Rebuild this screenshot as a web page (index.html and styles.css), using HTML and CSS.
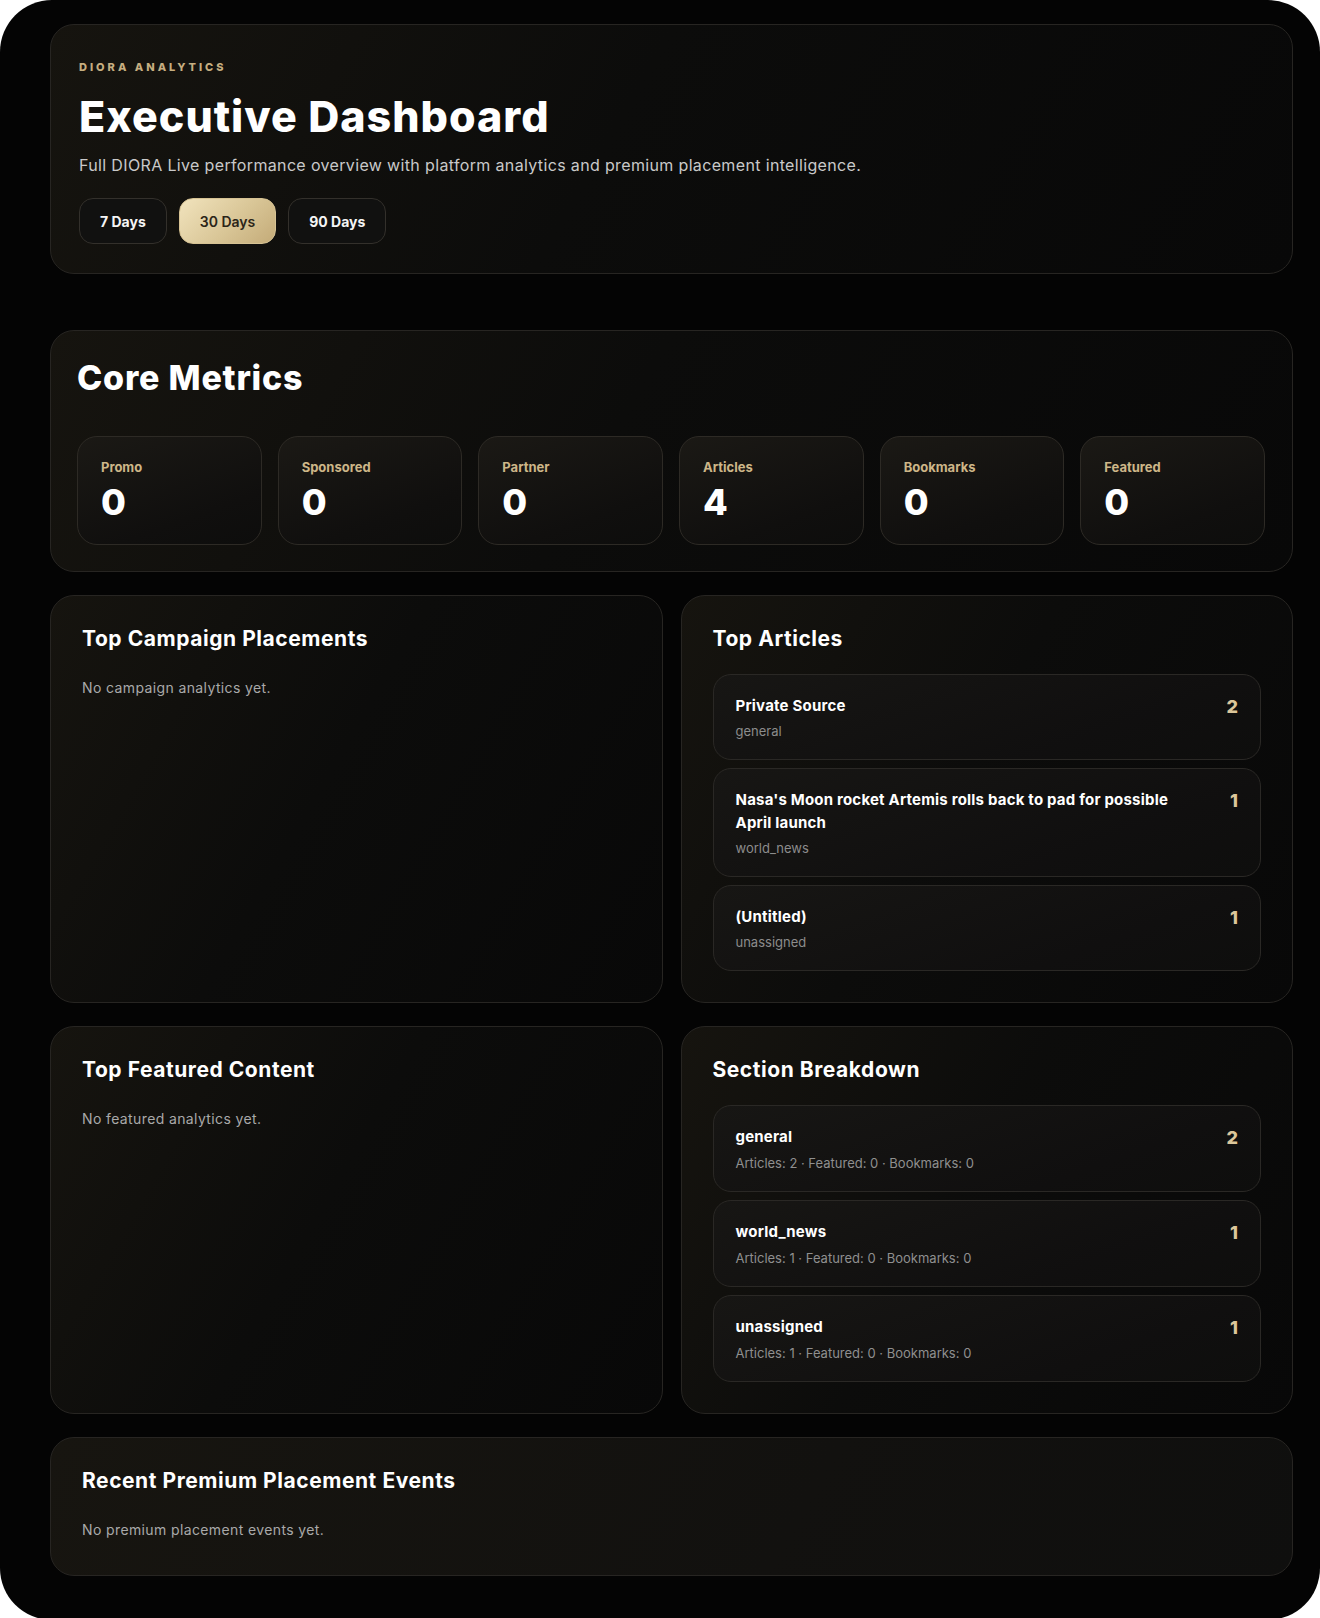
FILE: index.html
```html
<!DOCTYPE html>
<html lang="en">
<head>
    <meta charset="UTF-8">
    <meta name="viewport" content="width=device-width, initial-scale=1.0">
    <title>Executive Dashboard</title>
    <link rel="stylesheet" href="styles.css">
</head>
<body>
<div class="screen">
    <!-- header -->
    <div class="card hero">
        <p class="eyebrow">DIORA ANALYTICS</p>
        <h1>Executive Dashboard</h1>
        <p class="lead">Full DIORA Live performance overview with platform analytics and premium placement intelligence.</p>
        <div class="range-group">
            <button class="range">7 Days</button>
            <button class="range active">30 Days</button>
            <button class="range">90 Days</button>
        </div>
    </div>

    <!-- core metrics -->
    <div class="card core">
        <h2>Core Metrics</h2>
        <div class="metrics">
            <div class="metric"><span class="metric-label">Promo</span><span class="metric-value">0</span></div>
            <div class="metric"><span class="metric-label">Sponsored</span><span class="metric-value">0</span></div>
            <div class="metric"><span class="metric-label">Partner</span><span class="metric-value">0</span></div>
            <div class="metric"><span class="metric-label">Articles</span><span class="metric-value">4</span></div>
            <div class="metric"><span class="metric-label">Bookmarks</span><span class="metric-value">0</span></div>
            <div class="metric"><span class="metric-label">Featured</span><span class="metric-value">0</span></div>
        </div>
    </div>

    <div class="grid">
        <div class="card panel">
            <h3>Top Campaign Placements</h3>
            <p class="empty">No campaign analytics yet.</p>
        </div>
        <div class="card panel">
            <h3>Top Articles</h3>
            <div class="list">
                <div class="row">
                    <div class="row-text">
                        <div class="row-title">Private Source</div>
                        <div class="row-sub">general</div>
                    </div>
                    <div class="row-count">2</div>
                </div>
                <div class="row">
                    <div class="row-text">
                        <div class="row-title">Nasa's Moon rocket Artemis rolls back to pad for possible April launch</div>
                        <div class="row-sub">world_news</div>
                    </div>
                    <div class="row-count">1</div>
                </div>
                <div class="row">
                    <div class="row-text">
                        <div class="row-title">(Untitled)</div>
                        <div class="row-sub">unassigned</div>
                    </div>
                    <div class="row-count">1</div>
                </div>
            </div>
        </div>
    </div>

    <div class="grid">
        <div class="card panel">
            <h3>Top Featured Content</h3>
            <p class="empty">No featured analytics yet.</p>
        </div>
        <div class="card panel">
            <h3>Section Breakdown</h3>
            <div class="list">
                <div class="row">
                    <div class="row-text">
                        <div class="row-title">general</div>
                        <div class="row-meta">Articles: 2 · Featured: 0 · Bookmarks: 0</div>
                    </div>
                    <div class="row-count">2</div>
                </div>
                <div class="row">
                    <div class="row-text">
                        <div class="row-title">world_news</div>
                        <div class="row-meta">Articles: 1 · Featured: 0 · Bookmarks: 0</div>
                    </div>
                    <div class="row-count">1</div>
                </div>
                <div class="row">
                    <div class="row-text">
                        <div class="row-title">unassigned</div>
                        <div class="row-meta">Articles: 1 · Featured: 0 · Bookmarks: 0</div>
                    </div>
                    <div class="row-count">1</div>
                </div>
            </div>
        </div>
    </div>

    <div class="card panel events">
        <h3>Recent Premium Placement Events</h3>
        <p class="empty">No premium placement events yet.</p>
    </div>
</div>
</body>
</html>
```

FILE: styles.css
```css
* {
    box-sizing: border-box;
}
body {
    margin: 0;
    background: #ffffff;
    font-family: 'Inter', 'Noto Sans', sans-serif;
    color: #f4f4f4;
}
.screen {
    width: 1320px;
    min-height: 1618px;
    background: #040404;
    border-radius: 52px;
    padding: 24px 27px 44px 50px;
    display: flex;
    flex-direction: column;
    gap: 23px;
}
.card {
    border: 1px solid #272522;
    border-radius: 24px;
    background: linear-gradient(120deg, #16140f 0%, #0c0c0b 45%, #080808 100%);
}
.hero {
    padding: 35px 28px 29px;
    margin-bottom: 33px;
}
.eyebrow {
    margin: 0;
    font-size: 11px;
    line-height: 14px;
    font-weight: 800;
    letter-spacing: 3px;
    color: #c6ae80;
}
.hero h1 {
    margin: 17px 0 0;
    font-size: 43px;
    line-height: 50px;
    font-weight: 800;
    letter-spacing: 1px;
    color: #ffffff;
}
.lead {
    margin: 12px 0 0;
    font-size: 16px;
    line-height: 24px;
    color: #c9c9c9;
    letter-spacing: 0.35px;
}
.range-group {
    display: flex;
    gap: 12px;
    margin-top: 21px;
}
.range {
    height: 46px;
    padding: 0 20px;
    border: 1px solid #33302b;
    border-radius: 14px;
    background: #111110;
    color: #f5f5f5;
    font-family: inherit;
    font-size: 14px;
    font-weight: 700;
    cursor: pointer;
}
.range.active {
    background: linear-gradient(135deg, #f1e3bd 0%, #d9c697 55%, #c4ab78 100%);
    border-color: #d6c293;
    color: #2b2519;
    font-weight: 600;
}
.core {
    padding: 26px 27px 26px 26px;
}
.core h2 {
    margin: 0;
    font-size: 34px;
    line-height: 41px;
    font-weight: 800;
    letter-spacing: 0.8px;
    color: #ffffff;
}
.metrics {
    display: grid;
    grid-template-columns: repeat(6, 1fr);
    gap: 16px;
    margin-top: 38px;
}
.metric {
    display: flex;
    flex-direction: column;
    gap: 7px;
    padding: 22px 23px 22px;
    border: 1px solid #2d2a25;
    border-radius: 20px;
    background: linear-gradient(160deg, #1b1915 0%, #100f0e 70%, #0d0d0c 100%);
}
.metric-label {
    font-size: 13px;
    line-height: 16px;
    font-weight: 700;
    color: #cdb688;
}
.metric-value {
    font-size: 36px;
    line-height: 40px;
    font-weight: 800;
    color: #ffffff;
}
.grid {
    display: grid;
    grid-template-columns: 1fr 1fr;
    gap: 18px;
}
.panel {
    padding: 30px 31px 31px;
}
.panel h3 {
    margin: 0;
    font-size: 21px;
    line-height: 26px;
    font-weight: 700;
    letter-spacing: 0.55px;
    color: #ffffff;
}
.empty {
    margin: 26px 0 0;
    font-size: 14px;
    line-height: 20px;
    letter-spacing: 0.38px;
    color: #a9a9a9;
}
.events {
    padding-bottom: 35px;
    background: linear-gradient(120deg, #171510 0%, #12110f 60%, #0f0f0e 100%);
}
.list {
    display: flex;
    flex-direction: column;
    gap: 8px;
    margin-top: 22px;
}
.row {
    display: flex;
    align-items: flex-start;
    justify-content: space-between;
    gap: 40px;
    padding: 19px 22px;
    border: 1px solid #2a2825;
    border-radius: 18px;
    background: linear-gradient(160deg, #171614 0%, #100f0f 70%, #0e0e0d 100%);
}
.row-title {
    font-size: 15px;
    line-height: 23px;
    font-weight: 700;
    letter-spacing: 0.2px;
    color: #ffffff;
}
.row-sub {
    margin-top: 5px;
    font-size: 13px;
    line-height: 18px;
    color: #8c8c8c;
}
.row-meta {
    margin-top: 6px;
    font-size: 13px;
    line-height: 18px;
    color: #8f8f8f;
}
.row-count {
    margin-top: 1px;
    font-size: 18px;
    line-height: 24px;
    font-weight: 800;
    color: #dcc69a;
}
```
